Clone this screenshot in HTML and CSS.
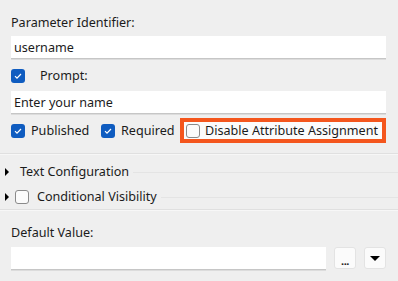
FILE: index.html
```html
<!DOCTYPE html>
<html>
<head>
<meta charset="utf-8">
<link rel="stylesheet" href="styles.css">
</head>
<body>
<div class="panel">
  <div class="label first">Parameter Identifier:</div>
  <div class="input">username</div>
  <div class="check-row prompt-row">
    <span class="cb checked"><svg viewBox="0 0 14 14" width="14" height="14"><path d="M4 7.2 L6 9.2 L10 5" fill="none" stroke="#fff" stroke-width="1.2"/></svg></span>
    <span class="prompt-text">Prompt:</span>
  </div>
  <div class="input">Enter your name</div>
  <div class="check-row flags">
    <label class="flag pub"><span class="cb checked"><svg viewBox="0 0 14 14" width="14" height="14"><path d="M4 7.2 L6 9.2 L10 5" fill="none" stroke="#fff" stroke-width="1.2"/></svg></span><span>Published</span></label>
    <label class="flag req"><span class="cb checked"><svg viewBox="0 0 14 14" width="14" height="14"><path d="M4 7.2 L6 9.2 L10 5" fill="none" stroke="#fff" stroke-width="1.2"/></svg></span><span>Required</span></label>
    <label class="flag highlight"><span class="cb"></span><span>Disable Attribute Assignment</span></label>
  </div>
</div>
<div class="sep"></div>
<div class="section">
  <div class="sec-row">
    <span class="tri"></span><span class="sec-title t1">Text Configuration</span><span class="rule"></span>
  </div>
  <div class="sec-row">
    <span class="tri"></span><span class="cb small"></span><span class="sec-title t2">Conditional Visibility</span><span class="rule"></span>
  </div>
</div>
<div class="sep"></div>
<div class="panel">
  <div class="label dv">Default Value:</div>
  <div class="value-row">
    <div class="input grow"></div>
    <div class="btn dots">...</div>
    <div class="btn drop"><span class="down"></span></div>
  </div>
</div>
</body>
</html>
```
FILE: styles.css
```css
html, body {
  margin: 0;
  padding: 0;
  background: #efefef;
}
body {
  font-family: "Noto Sans", "Open Sans", sans-serif;
  font-size: 12.6px;
  color: #1b1b1b;
  width: 398px;
  height: 281px;
  overflow: hidden;
}
.panel {
  padding: 0 12px 0 11px;
}
.label {
  height: 20px;
  line-height: 20px;
  white-space: nowrap;
}
.label.first {
  margin-top: 13px;
}
.input {
  box-sizing: border-box;
  margin-top: 3px;
  height: 23px;
  background: #fff;
  border-bottom: 1px solid #c6c6c6;
  box-shadow: 0 1px 0 #dcdcdc;
  padding: 0 3px;
  line-height: 23px;
  white-space: nowrap;
}
.check-row {
  display: flex;
  align-items: center;
  height: 25px;
  margin-top: 4px;
}
.prompt-row {
  margin-top: 4px;
}
.prompt-text {
  margin-left: 15px;
}
.cb {
  box-sizing: border-box;
  display: inline-block;
  width: 14px;
  height: 14px;
  border-radius: 3px;
  border: 1px solid #8a8a8a;
  background: #fbfbfb;
  flex: none;
}
.cb.checked {
  border: none;
  background: #0f5cc0;
}
.cb svg {
  display: block;
}
.flag {
  display: flex;
  align-items: center;
  gap: 6px;
  white-space: nowrap;
}
.pub {
  width: 90px;
  flex: none;
}
.req {
  width: 79px;
  flex: none;
}
.highlight {
  box-sizing: border-box;
  height: 25px;
  width: 207px;
  border: 4px solid #f4561d;
  background: #fbfbfb;
  padding-left: 2px;
  gap: 5px;
}
.sep {
  height: 1px;
  background: #e0e0e0;
  border-bottom: 1px solid #f7f7f7;
  margin-top: 10px;
}
.section {
  padding: 4px 0 0 5px;
}
.sec-row {
  display: flex;
  align-items: center;
  height: 25px;
  white-space: nowrap;
}
.tri {
  width: 0;
  height: 0;
  border-top: 4px solid transparent;
  border-bottom: 4px solid transparent;
  border-left: 4px solid #000;
  flex: none;
}
.t1 {
  margin-left: 11px;
}
.cb.small {
  margin-left: 6px;
  margin-right: 8px;
}
.rule {
  flex: 1;
  height: 1px;
  background: #e4e4e4;
  margin-left: 4px;
  margin-top: 1px;
}
.section + .sep {
  margin-top: 0;
}
.label.dv {
  margin-top: 12px;
}
.value-row {
  display: flex;
  align-items: flex-start;
  margin-top: 4px;
}
.value-row .input {
  margin-top: 0;
}
.grow {
  flex: 1;
}
.btn {
  box-sizing: border-box;
  width: 22px;
  height: 22px;
  margin-left: 8px;
  flex: none;
  background: #fbfbfb;
  border: 1px solid #e3e3e3;
  border-radius: 3px;
  display: flex;
  align-items: center;
  justify-content: center;
}
.dots {
  font-weight: bold;
  font-size: 11px;
  line-height: 11px;
  padding-top: 4px;
  letter-spacing: -0.5px;
}
.down {
  width: 0;
  height: 0;
  border-left: 5px solid transparent;
  border-right: 5px solid transparent;
  border-top: 5px solid #000;
}
```
